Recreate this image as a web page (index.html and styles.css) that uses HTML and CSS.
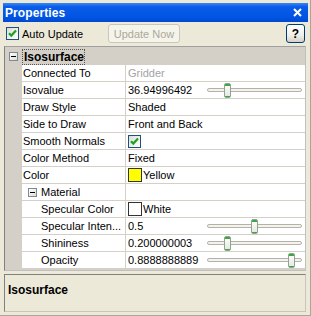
FILE: index.html
```html
<!DOCTYPE html>
<html lang="en">
<head>
	<meta charset="UTF-8">
	<title>Properties</title>
	<link rel="stylesheet" href="styles.css">
</head>
<body>
	<div class="window">
		<div class="titleBar">
			<span class="title">Properties</span>
			<svg class="close" width="9" height="9" viewBox="0 0 9 9"><path d="M1 1L8 8M8 1L1 8" stroke="#fff" stroke-width="2"/></svg>
		</div>
		<div class="toolbar">
			<div class="autoUpdate">
				<span class="check"><svg width="11" height="11" viewBox="0 0 11 11"><path d="M2 5.2L4.3 7.6L9 2.6" stroke="#21a121" stroke-width="2.2" fill="none"/></svg></span>
				<span>Auto Update</span>
			</div>
			<div class="btn disabled">Update Now</div>
			<div class="btn help">?</div>
		</div>
		<div class="grid">
			<div class="row category">
				<div class="gutter"><span class="toggle"></span></div>
				<div class="catName"><span class="focus">Isosurface</span></div>
			</div>
			<div class="row">
				<div class="gutter"></div>
				<div class="label">Connected To</div>
				<div class="value readonly">Gridder</div>
			</div>
			<div class="row">
				<div class="gutter"></div>
				<div class="label">Isovalue</div>
				<div class="value">
					<span class="num">36.94996492</span>
					<div class="slider"><div class="track"></div><div class="thumb" style="left: 17px"></div></div>
				</div>
			</div>
			<div class="row">
				<div class="gutter"></div>
				<div class="label">Draw Style</div>
				<div class="value">Shaded</div>
			</div>
			<div class="row">
				<div class="gutter"></div>
				<div class="label">Side to Draw</div>
				<div class="value">Front and Back</div>
			</div>
			<div class="row">
				<div class="gutter"></div>
				<div class="label">Smooth Normals</div>
				<div class="value">
					<span class="check"><svg width="11" height="11" viewBox="0 0 11 11"><path d="M2 5.2L4.3 7.6L9 2.6" stroke="#21a121" stroke-width="2.2" fill="none"/></svg></span>
				</div>
			</div>
			<div class="row">
				<div class="gutter"></div>
				<div class="label">Color Method</div>
				<div class="value">Fixed</div>
			</div>
			<div class="row">
				<div class="gutter"></div>
				<div class="label">Color</div>
				<div class="value"><span class="swatch yellow"></span>Yellow</div>
			</div>
			<div class="row">
				<div class="gutter"></div>
				<div class="label sub"><span class="toggle"></span>Material</div>
				<div class="value"></div>
			</div>
			<div class="row">
				<div class="gutter"></div>
				<div class="label child">Specular Color</div>
				<div class="value"><span class="swatch white"></span>White</div>
			</div>
			<div class="row">
				<div class="gutter"></div>
				<div class="label child">Specular Inten...</div>
				<div class="value">
					<span class="num">0.5</span>
					<div class="slider"><div class="track"></div><div class="thumb" style="left: 44px"></div></div>
				</div>
			</div>
			<div class="row">
				<div class="gutter"></div>
				<div class="label child">Shininess</div>
				<div class="value">
					<span class="num">0.200000003</span>
					<div class="slider"><div class="track"></div><div class="thumb" style="left: 17px"></div></div>
				</div>
			</div>
			<div class="row">
				<div class="gutter"></div>
				<div class="label child">Opacity</div>
				<div class="value">
					<span class="num">0.8888888889</span>
					<div class="slider"><div class="track"></div><div class="thumb" style="left: 81px"></div></div>
				</div>
			</div>
		</div>
		<div class="desc">Isosurface</div>
	</div>
</body>
</html>
```

FILE: styles.css
```css
*{
	margin: 0;
	padding: 0;
	box-sizing: border-box;
}
body{
	font-family: "Liberation Sans", Arial, sans-serif;
	font-size: 11px;
	color: #000;
	background: #ece9d8;
}
.window{
	display: flex;
	flex-direction: column;
	width: 311px;
	height: 316px;
	padding: 3px 4px 3px 4px;
	background: #ece9d8;
	border-right: 1px solid #a9a695;
	border-bottom: 1px solid #a9a695;
}
.titleBar{
	display: flex;
	align-items: center;
	height: 19px;
	margin: 0 -2px 0 -1px;
	padding: 0 6px 0 2px;
	background: linear-gradient(#3b86f5, #0a5ce8 20%, #0055e3 75%, #0049cf);
	color: #fff;
}
.titleBar>.title{
	font-weight: bold;
	font-size: 12px;
	letter-spacing: 0.1px;
}
.titleBar>.close{
	margin-left: auto;
}
.toolbar{
	display: flex;
	align-items: center;
	height: 24px;
	padding: 0 0 1px 2px;
}
.autoUpdate{
	display: flex;
	align-items: center;
	gap: 3px;
	width: 102px;
}
.check{
	display: flex;
	align-items: center;
	justify-content: center;
	width: 13px;
	height: 13px;
	border: 1px solid #1c5180;
	background: linear-gradient(135deg, #dcdcd7, #fff);
}
.btn{
	display: flex;
	align-items: center;
	justify-content: center;
	height: 19px;
	border-radius: 3px;
}
.btn.disabled{
	width: 72px;
	border: 1px solid #c9c7ba;
	background: #f5f4ea;
	color: #aca899;
}
.btn.help{
	width: 19px;
	margin-left: auto;
	margin-right: 1px;
	border: 1px solid #003c74;
	background: linear-gradient(#fff, #f0f0ea 60%, #d6d0c5);
	font-weight: bold;
	font-size: 12px;
}
.grid{
	flex: 1;
	overflow: hidden;
	border: 1px solid #7f9db9;
	border-color: #a0a0a0 #c0c0c0 #c0c0c0 #808080;
	background: #d4d0c8;
}
.row{
	display: flex;
	height: 17px;
	background: #fff;
}
.row>.gutter{
	display: flex;
	align-items: center;
	justify-content: center;
	width: 17px;
	background: #d4d0c8;
}
.row>.label{
	display: flex;
	align-items: center;
	width: 104px;
	padding-left: 1px;
	border-right: 1px solid #d4d0c8;
	border-bottom: 1px solid #d4d0c8;
	white-space: nowrap;
	overflow: hidden;
}
.row>.label.sub{
	padding-left: 6px;
	gap: 4px;
}
.row>.label.child{
	padding-left: 19px;
}
.row>.value{
	display: flex;
	align-items: center;
	flex: 1;
	padding-left: 2px;
	border-bottom: 1px solid #d4d0c8;
	white-space: nowrap;
}
.row>.value.readonly{
	color: #a3a3a3;
}
.row.category{
	height: 18px;
	background: #d4d0c8;
}
.catName{
	display: flex;
	align-items: center;
	padding-top: 1px;
	font-weight: bold;
	font-size: 12px;
}
.catName>.focus{
	padding: 0 0 0 1px;
	border: 1px dotted #555;
}
.toggle{
	position: relative;
	display: inline-block;
	width: 9px;
	height: 9px;
	border: 1px solid #7a8a99;
	background: linear-gradient(135deg, #fff, #e0ddd3);
}
.toggle::after{
	content: "";
	position: absolute;
	left: 1px;
	top: 3px;
	width: 5px;
	height: 1px;
	background: #000;
}
.swatch{
	display: inline-block;
	width: 14px;
	height: 14px;
	margin-right: 1px;
	border: 1px solid #333;
}
.swatch.yellow{
	background: #ffff00;
}
.swatch.white{
	background: #fff;
}
.num{
	width: 79px;
}
.slider{
	position: relative;
	width: 95px;
	height: 15px;
	display: flex;
	align-items: center;
}
.slider>.track{
	width: 100%;
	height: 4px;
	border: 1px solid #b4b2a8;
	border-radius: 2px;
	background: #f4f3ee;
}
.slider>.thumb{
	position: absolute;
	top: 0;
	width: 7px;
	height: 15px;
	border: 1px solid #8fa594;
	border-radius: 2px;
	background: linear-gradient(#3fa63f 0, #3fa63f 2px, #fbfbf8 2px, #e9e9e2 12px, #3fa63f 12px);
}
.desc{
	height: 38px;
	margin-top: 3px;
	padding: 8px 0 0 3px;
	border: 1px solid #a0a0a0;
	border-color: #808080 #c8c6bc #c8c6bc #808080;
	font-weight: bold;
	font-size: 12px;
}
```
